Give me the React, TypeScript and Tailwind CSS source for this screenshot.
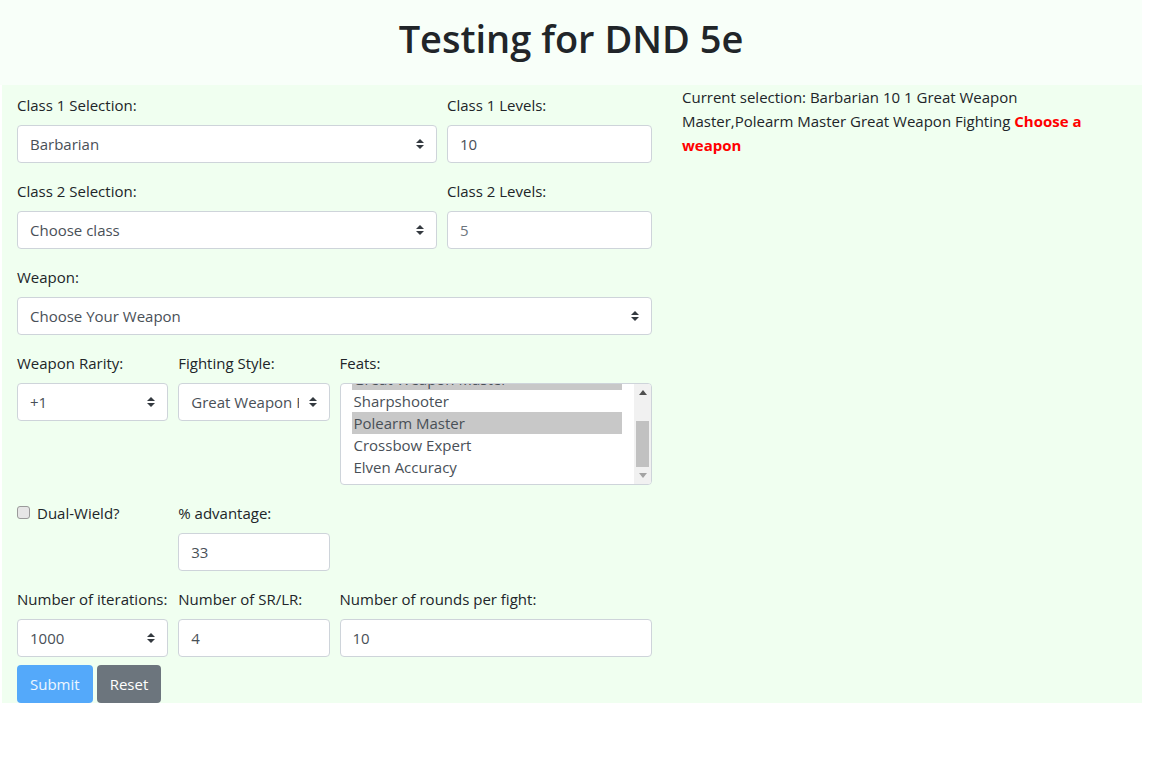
import React from "react";

const font = { fontFamily: '"Open Sans", "Noto Sans", sans-serif' };

function Arrow() {
  return (
    <svg width="8" height="10" viewBox="0 0 4 5" className="shrink-0">
      <path d="M2 0L0 2h4zm0 5L0 3h4z" fill="#343a40" />
    </svg>
  );
}

function Select({ value }: { value: string }) {
  return (
    <div className="flex h-[38px] w-full items-center rounded-[4px] border border-[#ced4da] bg-white pl-3 pr-3 text-[#495057]">
      <div className="mr-[10px] min-w-0 flex-1 overflow-hidden whitespace-nowrap">{value}</div>
      <Arrow />
    </div>
  );
}

function Input({ value, placeholder }: { value: string; placeholder?: boolean }) {
  return (
    <div
      className={
        "flex h-[38px] w-full items-center rounded-[4px] border border-[#ced4da] bg-white px-3 " +
        (placeholder ? "text-[#6c757d]" : "text-[#495057]")
      }
    >
      {value}
    </div>
  );
}

function Label({ children }: { children: React.ReactNode }) {
  return <div className="mb-2 whitespace-nowrap leading-6 text-[#212529]">{children}</div>;
}

function Group({ label, children, className }: { label?: string; children: React.ReactNode; className?: string }) {
  return (
    <div className={"mb-4 " + (className ?? "")}>
      {label && <Label>{label}</Label>}
      {children}
    </div>
  );
}

function FeatsList() {
  const items = [
    { t: "Great Weapon Master", s: true },
    { t: "Sharpshooter", s: false },
    { t: "Polearm Master", s: true },
    { t: "Crossbow Expert", s: false },
    { t: "Elven Accuracy", s: false },
  ];
  return (
    <div className="flex h-[102px] w-full overflow-hidden rounded-[4px] border border-[#ced4da] bg-white">
      <div className="min-w-0 flex-1 overflow-hidden pl-[11px] pr-[12px]">
        <div className="mt-[-16px]">
          {items.map((it) => (
            <div
              key={it.t}
              className={
                "h-[22px] whitespace-nowrap pl-[2px] leading-[22px] text-[#495057] " +
                (it.s ? "bg-[#c8c8c8]" : "")
              }
            >
              {it.t}
            </div>
          ))}
        </div>
      </div>
      <div className="flex w-[17px] shrink-0 flex-col items-center bg-[#f1f1f1]">
        <div className="flex h-[17px] w-full items-center justify-center">
          <svg width="8" height="5" viewBox="0 0 8 5">
            <path d="M4 0L8 5H0z" fill="#505050" />
          </svg>
        </div>
        <div className="flex w-full flex-1 flex-col px-[2px]">
          <div className="flex-1" />
          <div className="h-[46px] w-full bg-[#c1c1c1]" />
        </div>
        <div className="flex h-[17px] w-full items-center justify-center">
          <svg width="8" height="5" viewBox="0 0 8 5">
            <path d="M0 0H8L4 5z" fill="#a3a3a3" />
          </svg>
        </div>
      </div>
    </div>
  );
}

export default function App() {
  return (
    <div className="min-h-screen bg-white text-[15px] text-[#212529]" style={font}>
      <div className="w-[1142px]">
        <header className="h-[85px] bg-[#f8fff9] pt-[14px] text-center">
          <h1 className="text-[38px] font-semibold leading-[48px] text-[#212529]">Testing for DND 5e</h1>
        </header>
        <div className="ml-[2px] flex w-[1140px] bg-[#f0fff0]">
          <div className="w-[665px] px-[15px] pt-[8px]">
            <div className="flex gap-[10px]">
              <Group label="Class 1 Selection:" className="w-[420px]">
                <Select value="Barbarian" />
              </Group>
              <Group label="Class 1 Levels:" className="w-[205px]">
                <Input value="10" />
              </Group>
            </div>
            <div className="flex gap-[10px]">
              <Group label="Class 2 Selection:" className="w-[420px]">
                <Select value="Choose class" />
              </Group>
              <Group label="Class 2 Levels:" className="w-[205px]">
                <Input value="5" placeholder />
              </Group>
            </div>
            <Group label="Weapon:">
              <Select value="Choose Your Weapon" />
            </Group>
            <div className="grid grid-cols-4 gap-x-[10px]">
              <Group label="Weapon Rarity:">
                <Select value="+1" />
              </Group>
              <Group label="Fighting Style:">
                <Select value="Great Weapon Fighting" />
              </Group>
              <Group label="Feats:" className="col-span-2">
                <FeatsList />
              </Group>
            </div>
            <div className="grid grid-cols-4 gap-x-[10px]">
              <div className="mb-4 flex items-start">
                <div className="mt-[5px] h-[13px] w-[13px] shrink-0 rounded-[3px] border border-[#9a9a9a] bg-[#e6e6e6]" />
                <div className="ml-[7px] whitespace-nowrap leading-6">Dual-Wield?</div>
              </div>
              <Group label="% advantage:">
                <Input value="33" />
              </Group>
            </div>
            <div className="grid grid-cols-4 gap-x-[10px]">
              <div className="mb-2">
                <Label>Number of iterations:</Label>
                <Select value="1000" />
              </div>
              <div className="mb-2">
                <Label>Number of SR/LR:</Label>
                <Input value="4" />
              </div>
              <div className="col-span-2 mb-2">
                <Label>Number of rounds per fight:</Label>
                <Input value="10" />
              </div>
            </div>
            <div className="flex gap-[4px]">
              <button className="h-[38px] rounded-[4px] bg-[#54a9fa] px-[13px] leading-6 text-white/90">Submit</button>
              <button className="h-[38px] rounded-[4px] bg-[#6c757d] px-[13px] leading-6 text-white">Reset</button>
            </div>
          </div>
          <div className="w-[475px] whitespace-nowrap px-[15px] leading-6">
            Current selection: Barbarian 10 1 Great Weapon
            <br />
            Master,Polearm Master Great Weapon Fighting <span className="font-bold text-[#ff0000]">Choose a</span>
            <br />
            <span className="font-bold text-[#ff0000]">weapon</span>
          </div>
        </div>
      </div>
    </div>
  );
}
